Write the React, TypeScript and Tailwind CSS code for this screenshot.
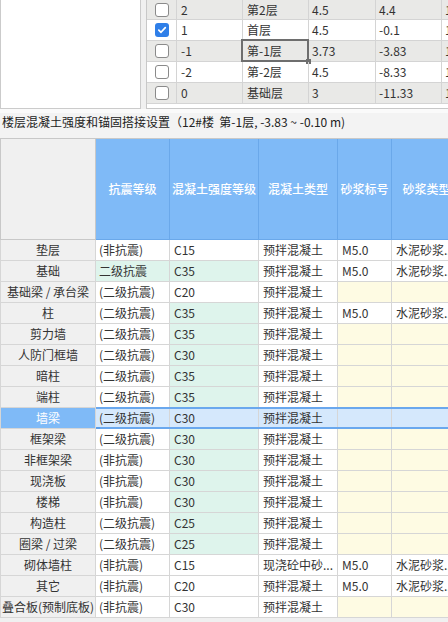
import React from "react";

type Row = {
  name: string;
  a: string;
  c: string;
  t?: string;
  m?: string;
  aG?: boolean;
  cG?: boolean;
  sel?: boolean;
};

const rows: Row[] = [
  { name: "垫层", a: "(非抗震)", c: "C15", m: "M5.0" },
  { name: "基础", a: "二级抗震", c: "C35", m: "M5.0", aG: true, cG: true },
  { name: "基础梁 / 承台梁", a: "(二级抗震)", c: "C20" },
  { name: "柱", a: "(二级抗震)", c: "C35", m: "M5.0", cG: true },
  { name: "剪力墙", a: "(二级抗震)", c: "C35", cG: true },
  { name: "人防门框墙", a: "(二级抗震)", c: "C30", cG: true },
  { name: "暗柱", a: "(二级抗震)", c: "C35", cG: true },
  { name: "端柱", a: "(二级抗震)", c: "C35", cG: true },
  { name: "墙梁", a: "(二级抗震)", c: "C30", sel: true },
  { name: "框架梁", a: "(二级抗震)", c: "C30", cG: true },
  { name: "非框架梁", a: "(非抗震)", c: "C30", cG: true },
  { name: "现浇板", a: "(非抗震)", c: "C30", cG: true },
  { name: "楼梯", a: "(非抗震)", c: "C30", cG: true },
  { name: "构造柱", a: "(二级抗震)", c: "C25", cG: true },
  { name: "圈梁 / 过梁", a: "(二级抗震)", c: "C25", cG: true },
  { name: "砌体墙柱", a: "(非抗震)", c: "C15", t: "现浇砼中砂...", m: "M5.0" },
  { name: "其它", a: "(非抗震)", c: "C20", m: "M5.0" },
  { name: "叠合板(预制底板)", a: "(非抗震)", c: "C30" },
];

const floors = [
  { chk: false, n: "2", name: "第2层", h: "4.5", e: "4.4" },
  { chk: true, n: "1", name: "首层", h: "4.5", e: "-0.1" },
  { chk: false, n: "-1", name: "第-1层", h: "3.73", e: "-3.83", sel: true },
  { chk: false, n: "-2", name: "第-2层", h: "4.5", e: "-8.33" },
  { chk: false, n: "0", name: "基础层", h: "3", e: "-11.33" },
];

function Check({ on }: { on: boolean }) {
  if (on) {
    return (
      <div className="w-[14px] h-[14px] rounded-[3px] bg-[#2f7fe8] flex items-center justify-center">
        <svg width="10" height="10" viewBox="0 0 10 10">
          <path d="M1.8 5.2 L4 7.3 L8.3 2.6" fill="none" stroke="white" strokeWidth="1.7" strokeLinecap="round" strokeLinejoin="round" />
        </svg>
      </div>
    );
  }
  return <div className="w-[14px] h-[14px] rounded-[3px] bg-white border border-[#8a8a8a]" />;
}

export default function App() {
  const font = { fontFamily: '"Noto Sans CJK SC", "Noto Sans", sans-serif' };
  const cell = "h-[21px] border-r border-b border-[#d6d6d6] flex items-center overflow-hidden whitespace-nowrap";
  return (
    <div className="w-[448px] h-[622px] overflow-hidden bg-[#f0f0f0] text-[12px] text-[#333]" style={font}>
      {/* top section */}
      <div className="flex h-[109px]">
        <div className="w-[141px] h-[109px] bg-white border border-[#cbcbcb] border-t-0" />
        <div className="w-[5px]" />
        <div className="flex-1 h-[109px] bg-white border-l border-b border-[#c8c8c8] overflow-hidden relative">
          {floors.map((f, i) => (
            <div
              key={i}
              className={`grid grid-cols-[30px_66px_66px_67px_66px_60px] ${i === 0 ? "h-[20px]" : "h-[21px]"} border-b border-[#d4d4d4] ${i % 2 === 0 ? "bg-[#e9e9e7]" : "bg-white"}`}
            >
              <div className="border-r border-[#d4d4d4] flex items-center justify-center">
                <Check on={f.chk} />
              </div>
              <div className="border-r border-[#d4d4d4] flex items-center pl-[4px]">{f.n}</div>
              <div className="border-r border-[#d4d4d4] flex items-center pl-[4px] relative">
                {f.name}
                {f.sel && (
                  <div className="absolute left-[-2px] top-[-2px] right-[-1px] bottom-[-1px] border-2 border-[#6e6e6e]">
                    <div className="absolute right-[-4px] bottom-[-4px] w-[5px] h-[5px] bg-[#6e6e6e]" />
                  </div>
                )}
              </div>
              <div className="border-r border-[#d4d4d4] flex items-center pl-[3px]">{f.h}</div>
              <div className="border-r border-[#d4d4d4] flex items-center pl-[3px]">{f.e}</div>
              <div className="flex items-center pl-[3px]">1</div>
            </div>
          ))}
        </div>
      </div>
      <div className="h-[4px] bg-[#fafafa]" />
      {/* title */}
      <div className="h-[25px] pt-[1px] pl-[2px] leading-[16px] bg-[#f3f3f3] whitespace-nowrap text-[#222]">
        楼层混凝土强度和锚固搭接设置（12#楼&nbsp;&nbsp;第-1层, -3.83 ~ -0.10 m)
      </div>
      {/* main table */}
      <div className="w-[520px]">
        <div className="grid grid-cols-[96px_74px_89px_79px_54px_70px] h-[102px] border-t border-[#c8c8c8]">
          <div className="bg-[#f0f0f0] border-l border-r border-b border-[#c8c8c8]" />
          {["抗震等级", "混凝土强度等级", "混凝土类型", "砂浆标号", "砂浆类型"].map((h) => (
            <div
              key={h}
              className="bg-[#7fbaf7] border-r border-b border-[#6aa8ea] flex items-center justify-center text-white font-medium whitespace-nowrap"
            >
              {h}
            </div>
          ))}
        </div>
        {rows.map((r, i) => {
          const sel = !!r.sel;
          const selBg = "bg-[#d5e8fc]";
          return (
            <div key={i} className="grid grid-cols-[96px_74px_89px_79px_54px_70px] relative">
              <div
                className={`${cell} justify-center border-l ${sel ? "bg-[#7fbaf7] text-white border-[#6aa8ea]" : "bg-[#f0f0f0]"}`}
              >
                {r.name}
              </div>
              <div className={`${cell} pl-[3px] ${sel ? selBg : r.aG ? "bg-[#def4ec]" : "bg-white"}`}>{r.a}</div>
              <div className={`${cell} pl-[4px] ${sel ? selBg : r.cG ? "bg-[#def4ec]" : "bg-white"}`}>{r.c}</div>
              <div className={`${cell} pl-[4px] ${sel ? selBg : "bg-white"}`}>{r.t ?? "预拌混凝土"}</div>
              <div className={`${cell} pl-[4px] ${sel ? selBg : r.m ? "bg-white" : "bg-[#fefbe3]"}`}>{r.m ?? ""}</div>
              <div className={`${cell} pl-[4px] ${sel ? selBg : r.m ? "bg-white" : "bg-[#fefbe3]"}`}>{r.m ? "水泥砂浆..." : ""}</div>
              {sel && (
                <div className="absolute left-[96px] right-0 top-[-1px] h-[22px] border-y-2 border-[#6aa8ee] pointer-events-none">
                  <div className="absolute left-[0px] bottom-[-4px] w-[4px] h-[4px] bg-[#5b9ee8]" />
                </div>
              )}
            </div>
          );
        })}
      </div>
    </div>
  );
}
